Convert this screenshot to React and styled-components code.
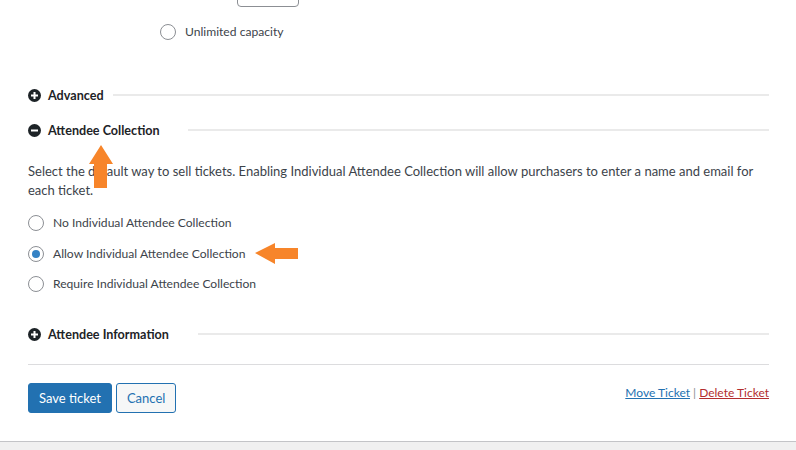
import React from "react";
import styled, { createGlobalStyle } from "styled-components";

const Global = createGlobalStyle`
  html, body { margin: 0; padding: 0; background: #fff; overflow: hidden; }
  body { font-family: Lato, "Open Sans", sans-serif; color: #3c434a; font-size: 13px; }
`;

const Page = styled.div`
  width: 796px;
  height: 450px;
  display: flex;
  flex-direction: column;
  position: relative;
  overflow: hidden;
`;

const Content = styled.div`
  height: 441px;
  padding: 0 27px 0 28px;
  box-sizing: border-box;
  display: flex;
  flex-direction: column;
`;

const FooterBar = styled.div`
  flex: 1;
  border-top: 1px solid #c3c4c7;
  background: #f0f0f0;
`;

const CapacityRow = styled.div`
  margin-top: -21px;
  height: 28px;
  display: flex;
  align-items: flex-end;
  gap: 5px;
  padding-left: 155px;
  font-size: 12px;
`;

const CapLabel = styled.span`
  line-height: 16px;
  margin-bottom: 5px;
`;

const TextInput = styled.div`
  width: 62px;
  height: 28px;
  border: 1px solid #8c8f94;
  border-radius: 4px;
  box-sizing: border-box;
  background: #fff;
`;

const RadioRow = styled.label`
  display: flex;
  align-items: center;
  gap: 9px;
  height: 16px;
  margin-left: ${(p) => p.$indent || 0}px;
  margin-top: ${(p) => p.$mt || 0}px;
  line-height: 16px;
  font-size: 12.1px;
  color: #3c434a;
`;

const RadioCircle = styled.span`
  width: 16px;
  height: 16px;
  border: 1px solid #8c8f94;
  border-radius: 50%;
  box-sizing: border-box;
  display: flex;
  align-items: center;
  justify-content: center;
  background: #fff;
  flex-shrink: 0;
  &::after {
    content: "";
    display: ${(p) => (p.$checked ? "block" : "none")};
    width: 8px;
    height: 8px;
    border-radius: 50%;
    background: #3582c4;
  }
`;

const SectionHeader = styled.div`
  display: flex;
  align-items: center;
  height: 20px;
  margin-top: ${(p) => p.$mt}px;
`;

const ToggleIcon = styled.span`
  width: 13px;
  height: 13px;
  border-radius: 50%;
  background: #1d2327;
  display: flex;
  flex-shrink: 0;
`;

const SectionTitle = styled.span`
  font-weight: 700;
  font-size: 12.6px;
  color: #1d2327;
  margin-left: 7px;
  width: ${(p) => p.$w}px;
`;

const Rule = styled.span`
  flex: 1;
  height: 2px;
  background: #eaeaea;
`;

const Paragraph = styled.p`
  margin: 22px 0 0;
  line-height: 19px;
  color: #3c434a;
`;

const RadioList = styled.div`
  display: flex;
  flex-direction: column;
  gap: 14.5px;
  margin-top: 15px;
`;

const Separator = styled.div`
  height: 1px;
  background: #dcdcde;
  margin-top: 20px;
`;

const Actions = styled.div`
  display: flex;
  align-items: flex-start;
  margin-top: 18px;
`;

const Button = styled.button`
  font-family: inherit;
  font-size: 13px;
  height: 30px;
  padding: 0 10px;
  border-radius: 3px;
  border: 1px solid #2271b1;
  background: ${(p) => (p.$primary ? "#2271b1" : "#f6f7f7")};
  color: ${(p) => (p.$primary ? "#fff" : "#2271b1")};
  margin-right: 4px;
  cursor: pointer;
`;

const Links = styled.div`
  margin-left: auto;
  padding-top: 2px;
  line-height: 16px;
  font-size: 12px;
  color: #8c8f94;
`;

const Link = styled.a`
  color: ${(p) => (p.$danger ? "#b32d2e" : "#2271b1")};
  text-decoration: underline;
`;

const Arrow = styled.svg`
  position: absolute;
  left: ${(p) => p.$x}px;
  top: ${(p) => p.$y}px;
`;

const Plus = () => (
  <ToggleIcon>
    <svg width="13" height="13" viewBox="0 0 13 13">
      <rect x="3" y="5.5" width="7" height="2" fill="#fff" />
      <rect x="5.5" y="3" width="2" height="7" fill="#fff" />
    </svg>
  </ToggleIcon>
);

const Minus = () => (
  <ToggleIcon>
    <svg width="13" height="13" viewBox="0 0 13 13">
      <rect x="3" y="5.5" width="7" height="2" fill="#fff" />
    </svg>
  </ToggleIcon>
);

const Section = ({ open, title, w, mt }) => (
  <SectionHeader $mt={mt}>
    {open ? <Minus /> : <Plus />}
    <SectionTitle $w={w}>{title}</SectionTitle>
    <Rule />
  </SectionHeader>
);

export default function App() {
  return (
    <>
      <Global />
      <Page>
        <Content>
          <CapacityRow>
            <CapLabel>Capacity:</CapLabel>
            <TextInput />
          </CapacityRow>
          <RadioRow $indent={132} $mt={17}>
            <RadioCircle />
            Unlimited capacity
          </RadioRow>

          <Section title="Advanced" w={65} mt={45} />
          <Section open title="Attendee Collection" w={140} mt={15} />

          <Paragraph>
            Select the default way to sell tickets. Enabling Individual Attendee Collection will allow purchasers to enter a name and email for each ticket.
          </Paragraph>

          <RadioList>
            <RadioRow>
              <RadioCircle />
              No Individual Attendee Collection
            </RadioRow>
            <RadioRow>
              <RadioCircle $checked />
              Allow Individual Attendee Collection
            </RadioRow>
            <RadioRow>
              <RadioCircle />
              Require Individual Attendee Collection
            </RadioRow>
          </RadioList>

          <Section title="Attendee Information" w={150} mt={32} />

          <Separator />

          <Actions>
            <Button $primary>Save ticket</Button>
            <Button>Cancel</Button>
            <Links>
              <Link $danger={false}>Move Ticket</Link> | <Link $danger>Delete Ticket</Link>
            </Links>
          </Actions>
        </Content>
        <FooterBar />

        <Arrow $x={88} $y={144} width="26" height="45" viewBox="0 0 26 45">
          <polygon points="13,1 25,20 19,20 19,44 6,44 6,20 1,20" fill="#f7852a" />
        </Arrow>
        <Arrow $x={254} $y={242} width="45" height="23" viewBox="0 0 45 23">
          <polygon points="1,11 21,1 21,6 44,6 44,17 21,17 21,22" fill="#f7852a" />
        </Arrow>
      </Page>
    </>
  );
}
